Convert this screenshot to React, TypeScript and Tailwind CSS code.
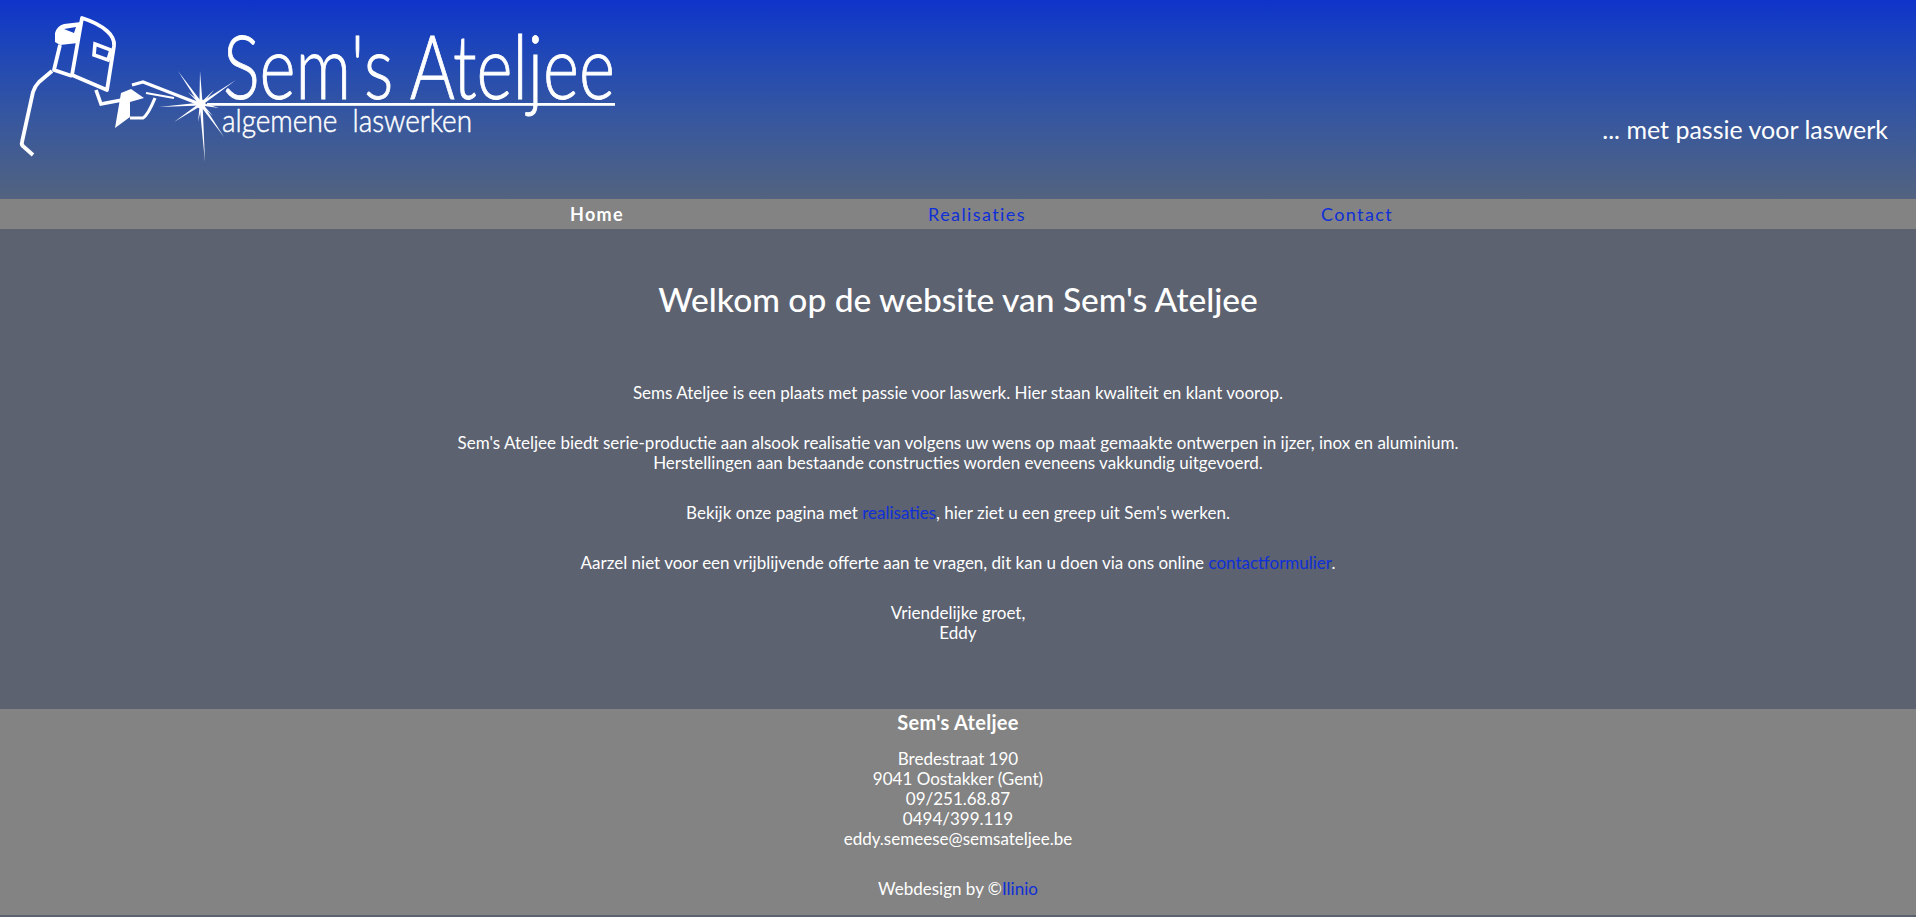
const BODY_FONT = "font-['Lato','Open_Sans',sans-serif]";

function Ray({ x, y, w = 1.6 }: { x: number; y: number; w?: number }) {
    // tapered spark ray starting at the centre of the flash
    const cx = 201;
    const cy = 104;
    const dx = x - cx;
    const dy = y - cy;
    const len = Math.hypot(dx, dy);
    const nx = (-dy / len) * w;
    const ny = (dx / len) * w;

    return (
        <polygon
            fill="white"
            points={`${cx + nx},${cy + ny} ${x},${y} ${cx - nx},${cy - ny}`}
        />
    );
}

function Logo() {
    return (
        <svg width="640" height="199" viewBox="0 0 640 199" className="block shrink-0 overflow-visible">
            {/* back and shoulder */}
            <path
                d="M52 71 L39 82 Q35 86 33 92 L22 142 Q21 145 24 147 L33 155"
                fill="none"
                stroke="white"
                strokeWidth="3.8"
                strokeLinejoin="round"
            />
            {/* visor */}
            <path
                d="M82 18 Q98 23 107 31 Q115 38 114 46 L107 90 L72 75 Z"
                fill="none"
                stroke="white"
                strokeWidth="3.8"
                strokeLinejoin="round"
            />
            {/* top of helmet */}
            <path
                fillRule="evenodd"
                fill="white"
                d="M81 22 L78 43 L60 45 L55 42 L55 33 Q57 26 64 24 Z M64 29 L76 27 L74 33 Z"
            />
            <path
                d="M60 45 L54 70 L72 76"
                fill="none"
                stroke="white"
                strokeWidth="3.8"
                strokeLinejoin="round"
            />
            {/* window */}
            <path
                d="M95 44 L111 50 L108 60 L94 55 Z"
                fill="none"
                stroke="white"
                strokeWidth="3.6"
            />
            {/* arm and glove */}
            <path
                d="M96 90 L101 104 L122 100"
                fill="none"
                stroke="white"
                strokeWidth="3.6"
            />
            <polygon
                fill="white"
                points="121,93 131,89 144,98 130,102 130,117 115,128"
            />
            <path
                d="M130 118 L143 118 Q148 115 155 98"
                fill="none"
                stroke="white"
                strokeWidth="3.2"
            />
            {/* torch */}
            <path
                d="M132 85 L143 82 L197 103"
                fill="none"
                stroke="white"
                strokeWidth="3.2"
            />
            <path d="M146 93 L174 98" fill="none" stroke="white" strokeWidth="2" />
            {/* spark */}
            <Ray x={200} y={71} />
            <Ray x={205} y={162} />
            <Ray x={159} y={107} />
            <Ray x={178} y={71} />
            <Ray x={236} y={80} />
            <Ray x={224} y={137} />
            <Ray x={174} y={122} />
            <Ray x={219} y={108} />
            <Ray x={214} y={90} w={1.2} />
            <Ray x={188} y={92} w={1.2} />
            <Ray x={213} y={116} w={1.2} />
            <Ray x={198} y={122} w={1.2} />
            <circle cx="201" cy="104" r="4.5" fill="white" />
            {/* logo lettering */}
            <rect x="207" y="103" width="408" height="2.8" fill="white" />
            <text
                x="223"
                y="99"
                fontSize="88"
                fontWeight="300"
                fill="white"
                stroke="white"
                strokeWidth="0.9"
                textLength="392"
                lengthAdjust="spacingAndGlyphs"
                fontFamily="Lato, sans-serif"
            >
                Sem's Ateljee
            </text>
            <text
                x="222"
                y="132"
                fontSize="32"
                fontWeight="300"
                fill="white"
                stroke="white"
                strokeWidth="0.5"
                textLength="250"
                lengthAdjust="spacingAndGlyphs"
                fontFamily="Lato, sans-serif"
                xmlSpace="preserve"
            >
                algemene  laswerken
            </text>
        </svg>
    );
}

function Header() {
    return (
        <header className="h-[199px] flex justify-between bg-gradient-to-b from-[#0f33ca] to-[#53637f]">
            <Logo />
            <div className="pt-[114px] pr-[28px] text-[25px] leading-[30px] text-white">
                ... met passie voor laswerk
            </div>
        </header>
    );
}

function Nav() {
    return (
        <nav className="h-[30px] bg-[#838383]">
            <ul className="ml-[407px] w-[1140px] grid grid-cols-3 text-center text-[18px] leading-[30px] tracking-[1.4px]">
                <li>
                    <a className="text-white font-bold">Home</a>
                </li>
                <li>
                    <a className="text-[#0f2fd8]">Realisaties</a>
                </li>
                <li>
                    <a className="text-[#0f2fd8]">Contact</a>
                </li>
            </ul>
        </nav>
    );
}

function Main() {
    return (
        <main className="h-[480px] pt-[50px] text-center text-white text-[17px] leading-[20px]">
            <h1 className="text-[33.5px] leading-[40px] font-medium mb-[64px]">
                Welkom op de website van Sem's Ateljee
            </h1>
            <p className="mb-[30px]">
                Sems Ateljee is een plaats met passie voor laswerk. Hier staan kwaliteit en klant voorop.
            </p>
            <p className="mb-[30px]">
                Sem's Ateljee biedt serie-productie aan alsook realisatie van volgens uw wens op maat gemaakte ontwerpen in ijzer, inox en aluminium.
                <br />
                Herstellingen aan bestaande constructies worden eveneens vakkundig uitgevoerd.
            </p>
            <p className="mb-[30px]">
                Bekijk onze pagina met <a className="text-[#0f2fd8]">realisaties</a>, hier ziet u een greep uit Sem's werken.
            </p>
            <p className="mb-[30px]">
                Aarzel niet voor een vrijblijvende offerte aan te vragen, dit kan u doen via ons online <a className="text-[#0f2fd8]">contactformulier</a>.
            </p>
            <p>
                Vriendelijke groet,
                <br />
                Eddy
            </p>
        </main>
    );
}

function Footer() {
    return (
        <footer className="h-[206px] pt-[1px] bg-[#838383] text-center text-white text-[17px] leading-[20px]">
            <div className="text-[20px] leading-[24px] tracking-[0.3px] font-bold mb-[15px]">
                Sem's Ateljee
            </div>
            <div>Bredestraat 190</div>
            <div>9041 Oostakker (Gent)</div>
            <div>09/251.68.87</div>
            <div>0494/399.119</div>
            <div>eddy.semeese@semsateljee.be</div>
            <div className="mt-[30px]">
                Webdesign by ©<a className="text-[#0f2fd8]">Ilinio</a>
            </div>
        </footer>
    );
}

export default function App() {
    return (
        <div className={`h-[917px] bg-[#5c6270] ${BODY_FONT}`}>
            <Header />
            <Nav />
            <Main />
            <Footer />
        </div>
    );
}
